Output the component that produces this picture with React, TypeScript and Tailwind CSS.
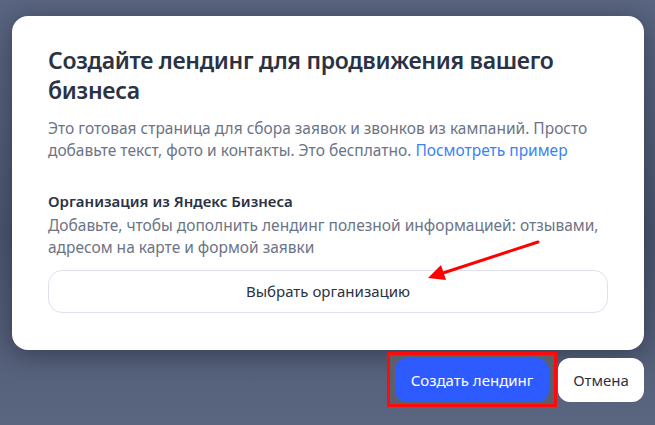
import React from "react";

export default function App() {
  return (
    <div
      className="relative w-[655px] h-[425px] overflow-hidden bg-[linear-gradient(180deg,#5a6581_0%,#4b556d_55%,#5a6580_100%)]"
      style={{ fontFamily: '"Noto Sans", "Open Sans", Arial, sans-serif' }}
    >
      <div className="flex flex-col pl-[12px] pr-[11px] pt-[16px]">
        <div className="rounded-[16px] bg-white pl-[36px] pr-[36px] pt-[29px] shadow-[0_4px_24px_rgba(20,25,40,0.45)] h-[334px]">
          <h1 className="text-[23px] leading-[30px] font-semibold text-[#2a3243] tracking-[-0.3px]">
            Создайте лендинг для продвижения вашего бизнеса
          </h1>
          <p className="mt-[12px] text-[15.5px] leading-[22px] text-[#6c7486]">
            Это готовая страница для сбора заявок и звонков из кампаний. Просто добавьте текст, фото и контакты. Это бесплатно.{" "}
            <span className="text-[#3b82f6]">Посмотреть пример</span>
          </p>
          <div className="mt-[29px] text-[15px] leading-[22px] font-semibold text-[#2a3243]">
            Организация из Яндекс Бизнеса
          </div>
          <p className="mt-[2px] text-[15.5px] leading-[22px] text-[#6c7486]">
            Добавьте, чтобы дополнить лендинг полезной информацией: отзывами, адресом на карте и формой заявки
          </p>
          <button className="mt-[12px] w-full h-[43px] rounded-[14px] border border-[#e1e0ee] bg-white text-[15px] text-[#2a3243]">
            Выбрать организацию
          </button>
        </div>
        <div className="flex justify-end items-start mt-[2px] gap-[1px]">
          <div className="border-[3px] border-[#ff0a0a] bg-[#5b5f6b] px-[5px] pt-[3px] pb-[2px]">
            <button className="h-[44px] w-[154px] rounded-[12px] bg-[#2e5bff] text-[15px] text-white">
              Создать лендинг
            </button>
          </div>
          <button className="mt-[6px] h-[44px] w-[86px] rounded-[12px] bg-white text-[15px] text-[#2a3243]">
            Отмена
          </button>
        </div>
      </div>
      <svg className="absolute left-0 top-0 pointer-events-none" width="655" height="425">
        <line x1="538" y1="242" x2="440" y2="274" stroke="#ff0000" strokeWidth="3" strokeLinecap="round" />
        <polygon points="428,278 441,265 446,280" fill="#ff0000" />
      </svg>
    </div>
  );
}
